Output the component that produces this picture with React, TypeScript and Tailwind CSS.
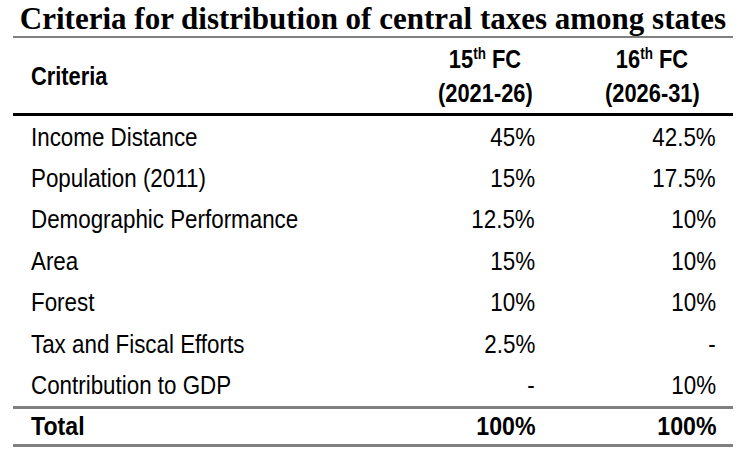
const rows: [string, string, string][] = [
  ['Income Distance', '45%', '42.5%'],
  ['Population (2011)', '15%', '17.5%'],
  ['Demographic Performance', '12.5%', '10%'],
  ['Area', '15%', '10%'],
  ['Forest', '10%', '10%'],
  ['Tax and Fiscal Efforts', '2.5%', '-'],
  ['Contribution to GDP', '-', '10%'],
]

// Arial Narrow look: Liberation Sans squeezed horizontally
const narrow = "font-['Liberation_Sans','Arial',sans-serif]"

export default function App() {
  return (
    <div className="w-[746px] h-[451px] bg-white text-black overflow-hidden">
      {/* Title */}
      <div className="flex justify-center pt-[2px] h-[36px]">
        <h1 className="font-['Liberation_Serif','Times_New_Roman',serif] font-bold text-[31px] leading-[34px] whitespace-nowrap">
          Criteria for distribution of central taxes among states
        </h1>
      </div>

      <div className={`mx-[13px] border-t-2 border-[#808080] ${narrow}`}>
        {/* Header */}
        <div className="flex h-[78px] items-center border-b-[3px] border-black font-bold text-[26px] leading-[34px]">
          <div className="w-[417px] pl-[18px]">
            <span className="inline-block scale-x-[0.84] origin-left whitespace-nowrap">Criteria</span>
          </div>
          <div className="w-[110px] px-[5px] flex flex-col items-center">
            <span className="inline-block scale-x-[0.84] origin-center whitespace-nowrap">
              15<span className="relative -top-[9px] text-[16px] leading-none">th</span> FC
            </span>
            <span className="inline-block scale-x-[0.84] origin-center whitespace-nowrap">(2021-26)</span>
          </div>
          <div className="w-[193px] pl-[48px] pr-[17px] flex flex-col items-center">
            <span className="inline-block scale-x-[0.84] origin-center whitespace-nowrap">
              16<span className="relative -top-[9px] text-[16px] leading-none">th</span> FC
            </span>
            <span className="inline-block scale-x-[0.84] origin-center whitespace-nowrap">(2026-31)</span>
          </div>
        </div>

        {/* Body */}
        <div className="text-[26px] leading-[30px]">
          {rows.map(([label, a, b]) => (
            <div key={label} className="flex h-[41.4px] items-center">
              <div className="w-[417px] pl-[18px]">
                <span className="inline-block scale-x-[0.86] origin-left whitespace-nowrap">{label}</span>
              </div>
              <div className="w-[110px] px-[5px] text-right">
                <span className="inline-block scale-x-[0.86] origin-right whitespace-nowrap">{a}</span>
              </div>
              <div className="w-[193px] pl-[48px] pr-[17px] text-right">
                <span className="inline-block scale-x-[0.86] origin-right whitespace-nowrap">{b}</span>
              </div>
            </div>
          ))}
        </div>

        {/* Total */}
        <div className="flex h-[41px] items-center border-y-[3px] border-[#808080] font-bold text-[26px] leading-[30px]">
          <div className="w-[417px] pl-[18px]">
            <span className="inline-block scale-x-[0.89] origin-left whitespace-nowrap">Total</span>
          </div>
          <div className="w-[110px] px-[5px] text-right">
            <span className="inline-block scale-x-[0.89] origin-right whitespace-nowrap">100%</span>
          </div>
          <div className="w-[193px] pl-[48px] pr-[17px] text-right">
            <span className="inline-block scale-x-[0.89] origin-right whitespace-nowrap">100%</span>
          </div>
        </div>
      </div>
    </div>
  )
}
